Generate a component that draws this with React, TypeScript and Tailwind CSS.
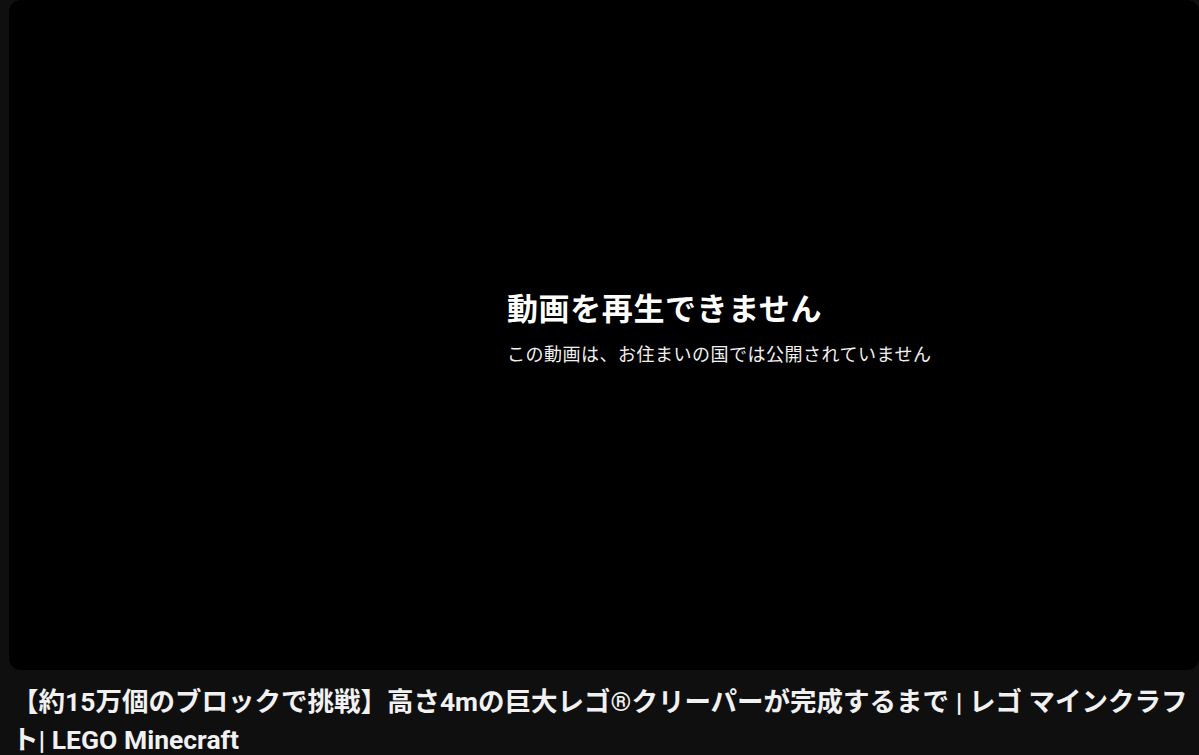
export default function App() {
  return (
    <div
      className="w-[1199px] h-[755px] overflow-hidden bg-[#0f0f0f] text-white"
      style={{ fontFamily: 'Roboto, "Noto Sans CJK JP", sans-serif' }}
    >
      <div className="ml-[9px] h-[670px] rounded-xl bg-black flex flex-col justify-center pl-[498px] pb-[14px]">
        <div className="text-[31px] font-bold leading-[40px] tracking-[0.6px]">動画を再生できません</div>
        <div className="mt-[13px] text-[18px] leading-[24px] tracking-[0.5px] text-[#f1f1f1]">
          この動画は、お住まいの国では公開されていません
        </div>
      </div>
      <h1 className="mt-[13px] pl-[12px] text-[26.5px] font-bold leading-[38px] whitespace-nowrap text-[#f1f1f1]">
        【約15万個のブロックで挑戦】高さ4mの巨大レゴ®クリーパーが完成するまで | レゴ マインクラフ
        <br />
        ト| LEGO Minecraft
      </h1>
    </div>
  );
}
